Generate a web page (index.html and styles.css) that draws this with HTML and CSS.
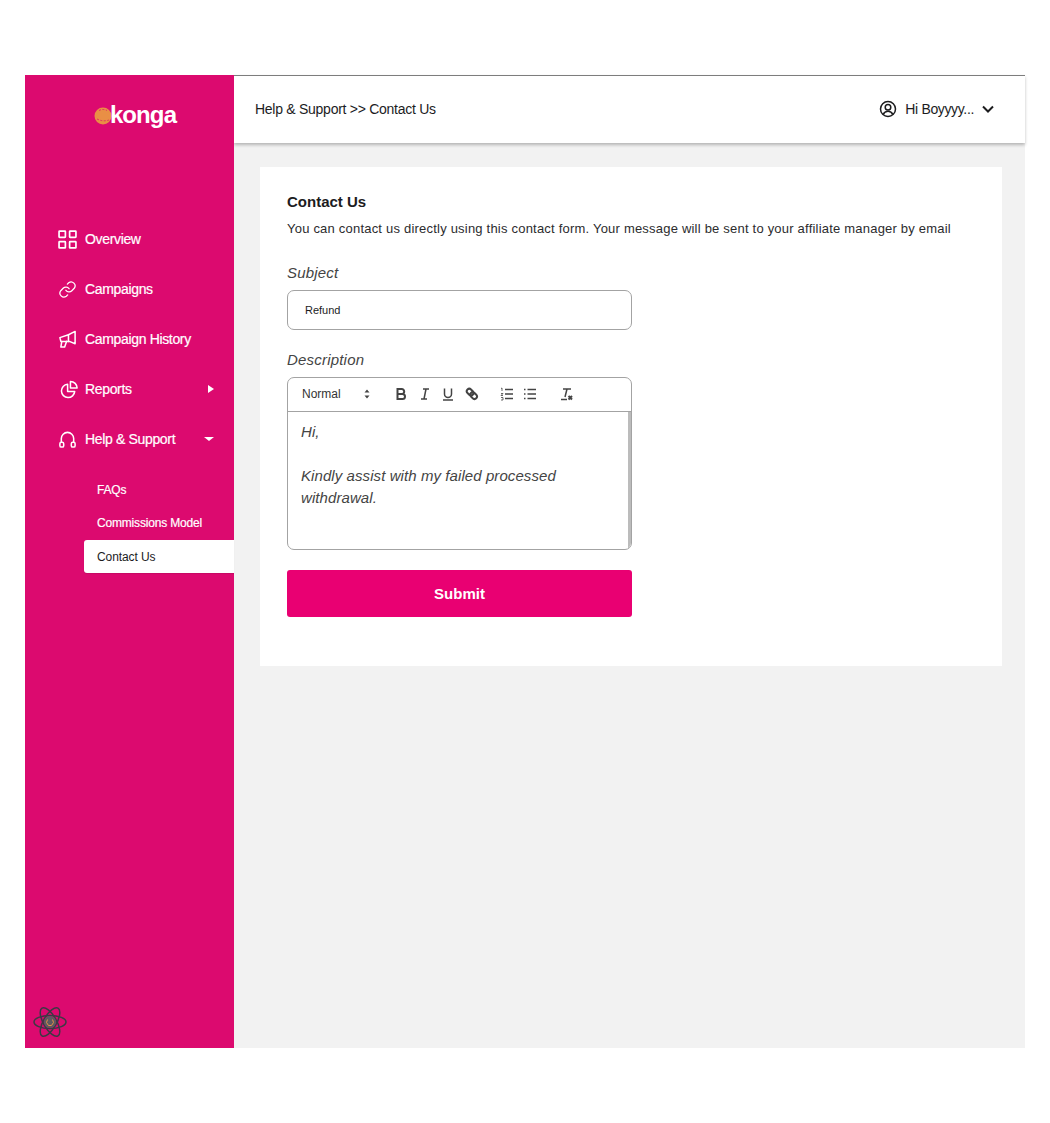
FILE: index.html
```html
<!DOCTYPE html>
<html lang="en">

<head>
  <meta charset="UTF-8">
  <title>Contact Us</title>
  <link rel="stylesheet" href="styles.css">
</head>

<body>
  <div class="app">
    <aside class="sidebar">
      <div class="logo">
        <svg class="logo-ball" viewBox="0 0 18 18" width="18" height="18">
          <circle cx="9" cy="9" r="8.5" fill="#e98f45" />
          <path d="M5 3.5q4-2 8 0M3 12q6 3 12 1" fill="none" stroke="#dc0a6f" stroke-width=".7" stroke-dasharray="2 1.5" />
        </svg>
        <span class="logo-text">konga</span>
      </div>

      <nav class="nav">
        <a class="nav-item">
          <svg class="nav-icon" viewBox="0 0 18 18">
            <rect x="1" y="1" width="6" height="6" rx="0.5" />
            <rect x="11" y="1" width="6" height="6" rx="0.5" />
            <rect x="1" y="11" width="6" height="6" rx="0.5" />
            <rect x="11" y="11" width="6" height="6" rx="0.5" />
          </svg>
          Overview
        </a>
        <a class="nav-item">
          <svg class="nav-icon" viewBox="0 0 24 24">
            <path d="M10 13a5 5 0 0 0 7.500.5l3-3a5 5 0 0 0-7-7l-1.700 1.700" />
            <path d="M14 11a5 5 0 0 0-7.500-.5l-3 3a5 5 0 0 0 7 7l1.700-1.700" />
          </svg>
          Campaigns
        </a>
        <a class="nav-item">
          <svg class="nav-icon" viewBox="0 0 20 20">
            <path d="M18 1.500v13l-6-2.500H3l-1-4 9-3z" />
            <path d="M11 5v7M4 12l-1 6h4l2-6" />
          </svg>
          Campaign History
        </a>
        <a class="nav-item">
          <svg class="nav-icon nudge" viewBox="0 0 20 20">
            <path d="M8 4.500a7 7 0 1 0 7.500 7.500H8z" />
            <path d="M11 1.500a7 7 0 0 1 7 7h-7z" />
          </svg>
          Reports
          <span class="caret-right"></span>
        </a>
        <a class="nav-item">
          <svg class="nav-icon" viewBox="0 0 20 20">
            <path d="M3.500 13v-4a6.500 6.500 0 0 1 13 0v4" />
            <rect x="2" y="13" width="4" height="5" rx="1.500" />
            <rect x="14" y="13" width="4" height="5" rx="1.500" />
          </svg>
          Help &amp; Support
          <span class="caret-down"></span>
        </a>
      </nav>

      <div class="subnav">
        <a class="subnav-item">FAQs</a>
        <a class="subnav-item">Commissions Model</a>
        <a class="subnav-item active">Contact Us</a>
      </div>

      <svg class="atom" viewBox="0 0 34 34" width="34" height="34">
        <g fill="none" stroke="#3b3a44" stroke-width="1.500">
          <ellipse cx="17" cy="17" rx="16" ry="6.500" />
          <ellipse cx="17" cy="17" rx="16" ry="6.500" transform="rotate(60 17 17)" />
          <ellipse cx="17" cy="17" rx="16" ry="6.500" transform="rotate(120 17 17)" />
        </g>
        <circle cx="17" cy="17" r="6" fill="#5c5a60" />
        <path d="M14.500 14.500l-1 3 2 3h3l2-3-1-3" fill="none" stroke="#e98f45" stroke-width="1" />
      </svg>
    </aside>

    <div class="main">
      <header class="topbar">
        <div class="crumbs">Help &amp; Support &gt;&gt; Contact Us</div>
        <div class="user">
          <svg class="user-icon" viewBox="0 0 18 18" width="18" height="18">
            <circle cx="9" cy="9" r="7.500" />
            <circle cx="9" cy="7.200" r="2.800" />
            <path d="M4.200 14.500c1-2.300 2.700-3.200 4.800-3.200s3.800.9 4.800 3.200" />
          </svg>
          <span>Hi Boyyyy...</span>
          <svg class="user-chevron" viewBox="0 0 12 8" width="12" height="8">
            <path d="M1 1.500l5 5 5-5" />
          </svg>
        </div>
      </header>

      <section class="card">
        <h1>Contact Us</h1>
        <p class="intro">You can contact us directly using this contact form. Your message will be sent to your affiliate manager by email</p>

        <form class="form">
          <label class="label">Subject</label>
          <div class="input">Refund</div>

          <label class="label">Description</label>
          <div class="editor">
            <div class="toolbar">
              <span class="tb-select">Normal</span>
              <svg class="tb-updown" viewBox="0 0 6 10" width="6" height="10">
                <path d="M3 .5l2.500 3h-5zM3 9.500l2.500-3h-5z" fill="#444" />
              </svg>
              <div class="tb-group tb-format">
                <svg class="tb-icon tb-bold" viewBox="0 0 14 14"><path d="M3.500 2h4.200a2.500 2.500 0 0 1 0 5H3.500zM3.500 7h5a2.500 2.500 0 0 1 0 5h-5z" /></svg>
                <svg class="tb-icon" viewBox="0 0 14 14"><path d="M5 2h6M3 12h6M8 2L6 12" /></svg>
                <svg class="tb-icon" viewBox="0 0 14 14"><path d="M3.500 1.500v5.500a3.500 3.500 0 0 0 7 0V1.500M2 13h10" /></svg>
                <svg class="tb-icon tb-bold" viewBox="0 0 14 14"><path d="M2.500 2.500a2.500 2.500 0 0 1 3.500 0l2 2a2.500 2.500 0 0 1-3.500 3.500l-2-2a2.500 2.500 0 0 1 0-3.500zM6 6a2.500 2.500 0 0 1 3.500 0l2 2A2.500 2.500 0 0 1 8 11.500l-2-2A2.500 2.500 0 0 1 6 6z" /></svg>
              </div>
              <div class="tb-group tb-lists">
                <svg class="tb-icon" viewBox="0 0 14 14"><path d="M5 2.500h8M5 7h8M5 11.500h8" /><path class="thin" d="M1 1.500l1-.5v3M1 6.500h2l-2 2h2M1 10.500h2v2.500H1" /></svg>
                <svg class="tb-icon" viewBox="0 0 14 14"><path d="M4.500 2.500h8.500M4.500 7h8.500M4.500 11.500h8.500M1 2.500h1.500M1 7h1.500M1 11.500h1.500" /></svg>
              </div>
              <svg class="tb-icon tb-clear" viewBox="0 0 14 14"><path d="M4 2h8M8 2L6 10M2 12.500h6" /><path class="x" d="M9.500 9l3.500 3.500M13 9l-3.500 3.500" /></svg>
            </div>
            <div class="editor-body">
              <p>Hi,</p>
              <p>&nbsp;</p>
              <p>Kindly assist with my failed processed withdrawal.</p>
            </div>
          </div>

          <button class="submit" type="button">Submit</button>
        </form>
      </section>
    </div>
  </div>
</body>

</html>
```

FILE: styles.css
```css
* {
  box-sizing: border-box;
}

body {
  --primary-pink: #dc0a6f;
  margin: 0;
  padding: 75px 25px 75px;
  font-family: "Liberation Sans", Arial, sans-serif;
  font-size: 14px;
  color: #1c1c1e;
  background: #fff;
}

.app {
  display: flex;
  height: 973px;
  background: #f2f2f2;
}

/* sidebar */

.sidebar {
  position: relative;
  width: 209px;
  flex-shrink: 0;
  background: var(--primary-pink);
  color: #fff;
}

.logo {
  display: flex;
  align-items: center;
  justify-content: center;
  height: 80px;
  padding: 1px 0 0 11px;
}

.logo-ball {
  margin-right: -2px;
}

.logo-text {
  font-size: 24px;
  font-weight: bold;
  letter-spacing: -0.9px;
  line-height: 1;
  padding-bottom: 1px;
}

.nav {
  margin-top: 59px;
}

.nav-item {
  position: relative;
  display: flex;
  align-items: center;
  gap: 8px;
  height: 50px;
  padding-left: 33px;
  font-size: 14px;
  letter-spacing: -0.34px;
  -webkit-text-stroke: 0.2px #fff;
}

.nav-icon {
  width: 19px;
  height: 19px;
  fill: none;
  stroke: #fff;
  stroke-width: 1.6;
  stroke-linejoin: round;
  stroke-linecap: round;
  flex-shrink: 0;
}

.nav-icon.nudge {
  margin-left: 2px;
  margin-right: -2px;
}

.caret-right {
  position: absolute;
  right: 20px;
  top: 21px;
  border-left: 6px solid #fff;
  border-top: 4px solid transparent;
  border-bottom: 4px solid transparent;
}

.caret-down {
  position: absolute;
  right: 20px;
  top: 23px;
  border-top: 4px solid #fff;
  border-left: 5px solid transparent;
  border-right: 5px solid transparent;
}

.subnav {
  margin-top: 9px;
  margin-left: 59px;
}

.subnav-item {
  display: flex;
  align-items: center;
  height: 33.500px;
  padding-left: 13px;
  font-size: 12px;
  letter-spacing: -0.18px;
  -webkit-text-stroke: 0.2px #fff;
}

.subnav-item.active {
  height: 33px;
  background: #fff;
  color: #1c1c1e;
  border-radius: 3px 0 0 3px;
  letter-spacing: -0.1px;
  -webkit-text-stroke: 0;
  box-shadow: 0 1px 1px rgba(0, 0, 0, 0.1);
}

.atom {
  position: absolute;
  left: 8px;
  bottom: 9px;
}

/* top bar */

.main {
  flex: 1;
  min-width: 0;
}

.topbar {
  display: flex;
  align-items: center;
  justify-content: space-between;
  height: 68px;
  padding: 0 31px 2px 21px;
  background: #fff;
  border-top: 1px solid #7d7d7d;
  box-shadow: 0 2px 3px rgba(0, 0, 0, 0.25);
}

.crumbs {
  font-size: 14px;
  letter-spacing: -0.27px;
}

.user {
  display: flex;
  align-items: center;
  font-size: 14px;
  letter-spacing: -0.35px;
}

.user-icon {
  fill: none;
  stroke: #1c1c1e;
  stroke-width: 1.500;
  margin-right: 8px;
}

.user-chevron {
  fill: none;
  stroke: #1c1c1e;
  stroke-width: 2;
  margin-left: 8px;
}

/* card */

.card {
  height: 499px;
  margin: 24px 23px 0 26px;
  padding: 27px 27px 0;
  background: #fff;
}

h1 {
  margin: 0 0 10px;
  font-size: 15px;
  line-height: 16px;
  font-weight: bold;
}

.intro {
  margin: 0;
  font-size: 13px;
  line-height: 18px;
  letter-spacing: 0.21px;
  color: #2c2c2e;
}

.form {
  width: 345px;
  margin-top: 26px;
}

.label {
  display: block;
  margin-bottom: 9px;
  font-size: 15px;
  line-height: 17px;
  font-style: italic;
  letter-spacing: 0.2px;
  color: #444;
}

.input {
  display: flex;
  align-items: center;
  height: 40px;
  margin-bottom: 21px;
  padding-left: 17px;
  font-size: 11px;
  border: 1px solid #a3a3a3;
  border-radius: 7px;
}

.editor {
  height: 173px;
  border: 1px solid #a3a3a3;
  border-radius: 7px;
  overflow: hidden;
}

.toolbar {
  display: flex;
  align-items: center;
  height: 34px;
  padding: 0 0 1px 14px;
  border-bottom: 1px solid #a3a3a3;
}

.tb-select {
  width: 62px;
  font-size: 12px;
  color: #333;
}

.tb-updown {
  margin-right: 24px;
}

.tb-group {
  display: flex;
  gap: 9.500px;
}

.tb-lists {
  margin-left: 21px;
}

.tb-icon {
  width: 14px;
  height: 14px;
  fill: none;
  stroke: #444;
  stroke-width: 1.500;
}

.tb-bold {
  stroke-width: 2;
}

.tb-icon .thin {
  stroke-width: 0.8;
}

.tb-icon .x {
  stroke-width: 2;
}

.tb-clear {
  margin-left: 22px;
}

.editor-body {
  height: 137px;
  padding: 9px 13px;
  font-size: 15px;
  line-height: 22px;
  font-style: italic;
  letter-spacing: 0.08px;
  color: #444;
  border-right: 3px solid #bcbcbc;
}

.editor-body p {
  margin: 0;
  max-width: 280px;
}

.submit {
  display: block;
  width: 100%;
  height: 47px;
  margin-top: 20px;
  border: none;
  border-radius: 3px;
  background: #e90072;
  color: #fff;
  font-family: inherit;
  font-size: 15px;
  font-weight: bold;
}
```
